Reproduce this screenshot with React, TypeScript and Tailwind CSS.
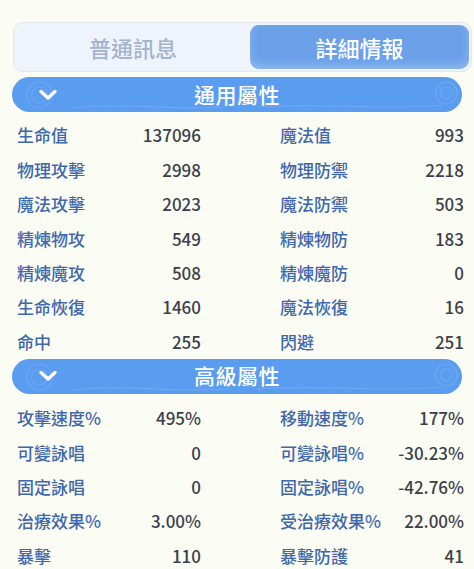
import React from "react";

const general: [string, string, string, string][] = [
  ["生命值", "137096", "魔法值", "993"],
  ["物理攻擊", "2998", "物理防禦", "2218"],
  ["魔法攻擊", "2023", "魔法防禦", "503"],
  ["精煉物攻", "549", "精煉物防", "183"],
  ["精煉魔攻", "508", "精煉魔防", "0"],
  ["生命恢復", "1460", "魔法恢復", "16"],
  ["命中", "255", "閃避", "251"],
];

const advanced: [string, string, string, string][] = [
  ["攻擊速度%", "495%", "移動速度%", "177%"],
  ["可變詠唱", "0", "可變詠唱%", "-30.23%"],
  ["固定詠唱", "0", "固定詠唱%", "-42.76%"],
  ["治療效果%", "3.00%", "受治療效果%", "22.00%"],
  ["暴擊", "110", "暴擊防護", "41"],
];

function Header({ title }: { title: string }) {
  return (
    <div className="relative mx-[12px] h-[35px] rounded-full bg-[#5a9cef] flex items-center justify-center overflow-hidden">
      <svg className="absolute inset-0 w-full h-full" viewBox="0 0 460 35" preserveAspectRatio="none" fill="none">
        <g stroke="#ffffff" strokeOpacity="0.12" strokeWidth="1.2">
          <circle cx="28" cy="18" r="13" />
          <circle cx="28" cy="18" r="8" />
          <path d="M60 31 C 120 25, 160 34, 220 30" />
          <circle cx="444" cy="16" r="11" />
          <circle cx="444" cy="16" r="6" />
          <path d="M250 30 C 320 25, 380 34, 440 28" />
        </g>
      </svg>
      <svg className="absolute left-[26px] top-1/2 -translate-y-1/2" width="20" height="14" viewBox="0 0 20 14" fill="none">
        <path d="M3 3.5 L10 10 L17 3.5" stroke="#ffffff" strokeWidth="3.4" strokeLinecap="round" strokeLinejoin="round" />
      </svg>
      <span className="relative text-white text-[21px] font-medium leading-none tracking-[0.5px] -mt-[1px]">{title}</span>
    </div>
  );
}

function Rows({ data }: { data: [string, string, string, string][] }) {
  return (
    <div className="grid grid-cols-2 gap-x-[79px] pl-[17px] pr-[10px] font-medium">
      {data.map((r, i) => (
        <React.Fragment key={i}>
          <div className="h-[34.4px] flex items-center justify-between">
            <span className="text-[#3f67ad] text-[17px]">{r[0]}</span>
            <span className="text-[#3c3f4b] text-[17px]">{r[1]}</span>
          </div>
          <div className="h-[34.4px] flex items-center justify-between">
            <span className="text-[#3f67ad] text-[17px]">{r[2]}</span>
            <span className="text-[#3c3f4b] text-[17px]">{r[3]}</span>
          </div>
        </React.Fragment>
      ))}
    </div>
  );
}

export default function App() {
  return (
    <div
      className="w-[474px] h-[569px] overflow-hidden bg-[#fbfcf3] pt-[22px]"
      style={{ fontFamily: '"Noto Sans CJK TC", "Noto Sans", sans-serif' }}
    >
      <div className="ml-[13px] mr-[2px] h-[50px] rounded-[10px] bg-[#eff3fb] border border-[#e0e7f1] p-[2px] flex">
        <div className="flex-1 flex items-center justify-center text-[#a3b3cd] text-[22px] font-medium">普通訊息</div>
        <div className="w-[219px] rounded-[9px] bg-[#6ba0e9] flex items-center justify-center text-white text-[22px] font-medium shadow-[inset_0_-4px_8px_rgba(255,255,255,0.25)]">
          詳細情報
        </div>
      </div>
      <div className="mt-[5px]">
        <Header title="通用屬性" />
      </div>
      <div className="mt-[6px]">
        <Rows data={general} />
      </div>
      <Header title="高級屬性" />
      <div className="mt-[7px]">
        <Rows data={advanced} />
      </div>
    </div>
  );
}
